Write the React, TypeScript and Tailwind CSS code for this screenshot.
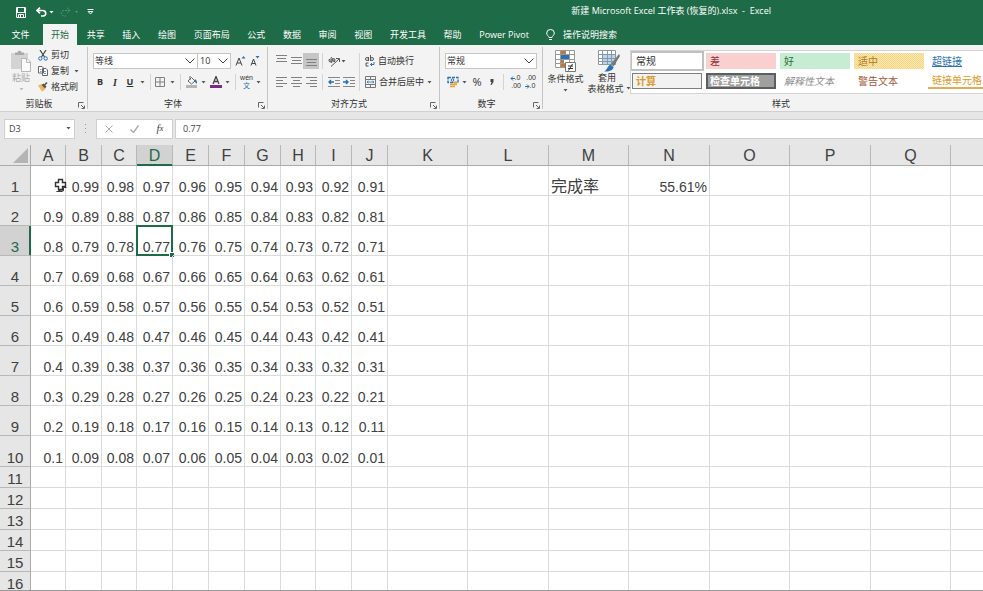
import React from 'react';

interface Column {
    name: string;
    width: number;
}

const columns: Column[] = [
    { name: 'A', width: 35 },
    { name: 'B', width: 36 },
    { name: 'C', width: 35 },
    { name: 'D', width: 36 },
    { name: 'E', width: 36 },
    { name: 'F', width: 36 },
    { name: 'G', width: 36 },
    { name: 'H', width: 35 },
    { name: 'I', width: 36 },
    { name: 'J', width: 36 },
    { name: 'K', width: 80 },
    { name: 'L', width: 81 },
    { name: 'M', width: 80 },
    { name: 'N', width: 81 },
    { name: 'O', width: 80 },
    { name: 'P', width: 81 },
    { name: 'Q', width: 80 },
    { name: 'R', width: 81 },
];

const ROW_HEADER = 31;
const tableWidth = columns.reduce((sum, c) => sum + c.width, ROW_HEADER);
const rows = Array.from({ length: 16 }, (_, i) => i + 1);
const tabs = ['开始', '共享', '插入', '绘图', '页面布局', '公式', '数据', '审阅', '视图', '开发工具', '帮助', 'Power Pivot'];

// A..J hold 1.00 down to 0.01, ten values per row.
const cellValue = (row: number, col: number): string => {
    if (row === 1 && columns[col].name === 'M') return '完成率';
    if (row === 1 && columns[col].name === 'N') return '55.61%';
    if (row > 10 || col > 9) return '';
    return String((100 - (row - 1) * 10 - col) / 100);
};

const Caret = () => (
    <svg width="5" height="3" viewBox="0 0 5 3" className="shrink-0">
        <path d="M0.5 0h4L2.5 2.5z" fill="#555" />
    </svg>
);

const Separator = () => <span className="h-4 w-px shrink-0 bg-[#d4d4d4]" />;

const Chevron = () => (
    <svg width="10" height="6" viewBox="0 0 10 6" className="pointer-events-none absolute right-[3px] top-[5px]">
        <path d="M0.5 0.5L5 5l4.5-4.5" fill="none" stroke="#444" />
    </svg>
);

interface ToolProps {
    label: string;
    className?: string;
    children: React.ReactNode;
}

const Tool: React.FC<ToolProps> = ({ label, className = '', children }) => (
    <button type="button" aria-label={label} title={label} className={`flex h-4 shrink-0 items-center justify-center ${className}`}>
        {children}
    </button>
);

interface GroupProps {
    title: string;
    className: string;
    titleClass?: string;
    launcher?: boolean;
    children: React.ReactNode;
}

const Group: React.FC<GroupProps> = ({ title, className, titleClass = '', launcher = true, children }) => (
    <section className={`my-0.5 flex flex-col ${className}`} aria-label={title}>
        <div className="h-12">{children}</div>
        <div className={`flex h-[14px] items-center pt-[3px] ${titleClass}`}>
            <span className="flex-1 text-center leading-3">{title}</span>
            {launcher && (
                <button type="button" aria-label={`${title}设置`} className="pr-0.5 pt-1">
                    <svg width="7" height="7" viewBox="0 0 7 7" fill="none" stroke="#666">
                        <path d="M0.5 5.5v-5h5M3 3l3 3M6.5 3.5v3h-3" />
                    </svg>
                </button>
            )}
        </div>
    </section>
);

const AlignLines = ({ d }: { d: string }) => (
    <svg width="11" height="12" viewBox="0 0 11 12" fill="none" stroke="#808080">
        <path d={d} />
    </svg>
);

const Indent = ({ arrow }: { arrow: string }) => (
    <svg width="12" height="11" viewBox="0 0 12 11" fill="none">
        <path d="M0 0.5h12M7 3.5h5M7 6.5h5M0 9.5h12" stroke="#888" />
        <path d={arrow} stroke="#2672b8" strokeWidth="1.4" />
    </svg>
);

const TitleBar = () => (
    <header className="bg-[#1e6b47] text-white">
        <div className="flex h-6 items-center">
            <div className="flex flex-1 items-center pl-[15px]">
                <Tool label="保存" className="w-3">
                    <svg width="10" height="11" viewBox="0 0 10 11" fill="none" stroke="white">
                        <path d="M0.5 0.5h9v10h-9zM1 5.5h8" />
                        <path d="M1.5 1v4M8.5 1v4M2.5 10.5v-3h5v3M4.5 8v2" />
                    </svg>
                </Tool>
                <Tool label="撤消" className="ml-[9px] w-[11px]">
                    <svg width="11" height="10" viewBox="0 0 11 10" fill="none" stroke="white" strokeWidth="1.6">
                        <path d="M4 0.7L1 3.5l3 2.8M1 3.5h5.5c4 0 4.5 5 0.5 5.5H5" />
                    </svg>
                </Tool>
                <svg width="5" height="3" viewBox="0 0 5 3" className="ml-[2px]"><path d="M0.5 0h4L2.5 2.5z" fill="white" /></svg>
                <Tool label="恢复" className="ml-[6px] w-[11px]">
                    <svg width="11" height="10" viewBox="0 0 11 10" fill="none" stroke="#56957a" strokeDasharray="2 1">
                        <path d="M7 0.7l3 2.8-3 2.8M10 3.5H4.5c-4 0-4.5 5-0.5 5.5H6" />
                    </svg>
                </Tool>
                <svg width="5" height="3" viewBox="0 0 5 3" className="ml-[3px]"><path d="M1 0h3L2.5 2z" fill="#56957a" /></svg>
                <Tool label="自定义快速访问工具栏" className="ml-2 w-[7px]">
                    <svg width="7" height="6" viewBox="0 0 7 6" fill="none" stroke="white">
                        <path d="M0.5 0.5h6M1.2 2.5h4.6L3.5 5z" />
                    </svg>
                </Tool>
            </div>
            <h1 className="whitespace-pre pb-0.5">新建 Microsoft Excel 工作表 (恢复的).xlsx  -  Excel</h1>
            <div className="w-[212px]" />
        </div>
        <nav className="flex h-[21px] items-stretch">
            <button type="button" className="w-[43px] pr-0.5">文件</button>
            <div className="flex w-[494px] items-stretch justify-between">
                {tabs.map((tab) => (
                    <button
                        key={tab}
                        type="button"
                        className={`shrink-0 whitespace-nowrap px-2 ${tab === '开始' ? 'bg-[#f3f3f3] text-[#1e6b47]' : ''}`}
                    >
                        {tab}
                    </button>
                ))}
            </div>
            <button type="button" className="flex items-center gap-2 pl-[9px]">
                <svg width="9" height="12" viewBox="0 0 9 12" fill="none" stroke="white">
                    <path d="M3 8.5C3 7 0.7 6.5 0.7 4a3.8 3.5 0 0 1 7.6 0C8.3 6.5 6 7 6 8.5zM3 10.5h3" />
                </svg>
                操作说明搜索
            </button>
        </nav>
    </header>
);

const ClipboardGroup = () => (
    <Group title="剪贴板" className="w-[87px]">
        <div className="flex">
            <button type="button" className="flex w-[38px] flex-col items-center pl-1 pt-[3px] text-[#aaa]">
                <svg width="20" height="22" viewBox="0 0 20 22">
                    <path d="M0 3h17v16H0z" fill="#d3d3d3" />
                    <path d="M4 2.5h2.5c0-2.5 4-2.5 4 0H13V5H4z" fill="#aaa" />
                    <path d="M10.5 8.5h5.5l3.5 3.5v9.5h-9z" fill="#fafafa" stroke="#b5b5b5" />
                    <path d="M15.5 8.5v4h4" fill="none" stroke="#b5b5b5" />
                </svg>
                <span className="leading-3">粘贴</span>
                <svg width="5" height="3" viewBox="0 0 5 3" className="mt-1"><path d="M0.5 0h4L2.5 2.5z" fill="#bbb" /></svg>
            </button>
            <div className="flex flex-col">
                <button type="button" className="flex h-4 items-center gap-[3px]">
                    <svg width="10" height="11" viewBox="0 0 10 11" fill="none">
                        <path d="M2 0l4.5 7M8 0L3.5 7" stroke="#444" strokeWidth="1.2" />
                        <circle cx="2.3" cy="8.5" r="1.7" stroke="#2672b8" />
                        <circle cx="7.7" cy="8.5" r="1.7" stroke="#2672b8" />
                    </svg>
                    剪切
                </button>
                <button type="button" className="flex h-4 items-center gap-[3px]">
                    <svg width="10" height="10" viewBox="0 0 10 10" fill="white" stroke="#666">
                        <path d="M0.5 0.5h3.5l1.5 1.5v5h-5zM4.5 2.5H8L9.5 4v5.5h-5z" />
                        <path d="M6 5.5h2M6 7.5h2M2 3.5h1.5M2 5.5h1.5" stroke="#2672b8" strokeWidth="0.7" />
                    </svg>
                    复制
                    <span className="pl-0.5"><Caret /></span>
                </button>
                <button type="button" className="flex h-4 items-center gap-[3px]">
                    <svg width="10" height="10" viewBox="0 0 10 10">
                        <path d="M0 3.5L3.5 2l4 4L6 8.5 4 9.5z" fill="#f0b65a" />
                        <path d="M3.5 3l2-1.5 3 3L7 6.5z" fill="#555" />
                        <path d="M6 3.5L9 0.5" stroke="#555" strokeWidth="1.6" />
                    </svg>
                    格式刷
                </button>
            </div>
        </div>
    </Group>
);

const FontGroup = () => (
    <Group title="字体" className="w-[180px] border-l border-[#c4c4c4]">
        <div className="flex h-[22px] items-end pl-[5px]">
            <label className="relative block w-[105px]">
                <select aria-label="字体" className="block h-4 w-full appearance-none border border-[#c6c6c6] bg-white px-px leading-[14px]">
                    <option>等线</option>
                </select>
                <Chevron />
            </label>
            <label className="relative -ml-px block w-[34px]">
                <select aria-label="字号" className="block h-4 w-full appearance-none border border-[#c6c6c6] bg-white px-0.5 leading-[14px]">
                    <option>10</option>
                </select>
                <Chevron />
            </label>
            <Tool label="增大字号" className="ml-[3px] w-3">
                <svg width="11" height="11" viewBox="0 0 11 11" fill="none">
                    <path d="M1 9.5L4 2l3 7.5M2 7h4" stroke="#444" />
                    <path d="M6.5 2.5h4L8.5 0z" fill="#2672b8" />
                </svg>
            </Tool>
            <Tool label="减小字号" className="ml-[3px] w-3">
                <svg width="10" height="11" viewBox="0 0 10 11" fill="none">
                    <path d="M1 9.5L3.5 3 6 9.5M2 7.5h3" stroke="#444" />
                    <path d="M5.5 0h4L7.5 2.5z" fill="#2672b8" />
                </svg>
            </Tool>
        </div>
        <div className="flex h-[26px] items-center pl-[5px]">
            <Tool label="加粗" className="w-[14px] font-bold">B</Tool>
            <Tool label="倾斜" className="w-4 font-['Liberation_Serif',serif] text-[10px] font-bold italic">I</Tool>
            <Tool label="下划线" className="w-[14px] font-bold underline">U</Tool>
            <span className="ml-[3px]"><Caret /></span>
            <span className="ml-[5px] flex"><Separator /></span>
            <Tool label="边框" className="ml-1 w-[11px]">
                <svg width="11" height="11" viewBox="0 0 11 11" fill="none" stroke="#808080">
                    <path d="M0.5 0.5h9v9h-9zM5 0v10M0 5h10" />
                </svg>
            </Tool>
            <span className="ml-1"><Caret /></span>
            <span className="ml-[5px] flex"><Separator /></span>
            <Tool label="填充颜色" className="ml-[5px] w-3">
                <svg width="12" height="12" viewBox="0 0 12 12" fill="none">
                    <path d="M0 9h11v3H0z" fill="#b5b5b5" />
                    <path d="M2 5L5.5 1.5 9 5 5.5 8zM4 0v4" stroke="#666" />
                    <path d="M9 3c2 1.5 2.5 3 1.5 5L8.5 5z" fill="#2672b8" />
                </svg>
            </Tool>
            <span className="ml-[3px]"><Caret /></span>
            <Tool label="字体颜色" className="ml-1 w-3">
                <svg width="12" height="12" viewBox="0 0 12 12" fill="none">
                    <path d="M3 8L6 0.5 9 8M4 5.5h4" stroke="#444" strokeWidth="1.3" />
                    <path d="M0 9h12v3H0z" fill="#7b2a83" />
                </svg>
            </Tool>
            <span className="ml-[3px]"><Caret /></span>
            <span className="ml-[5px] flex"><Separator /></span>
            <Tool label="显示拼音" className="ml-1 w-[13px] flex-col font-['Liberation_Sans','Noto_Sans_CJK_SC',sans-serif] text-[7px] leading-[8px]">
                <span>wén</span>
                <span className="text-[#2672b8]">文</span>
            </Tool>
            <span className="ml-[3px]"><Caret /></span>
        </div>
    </Group>
);

const AlignGroup = () => (
    <Group title="对齐方式" className="w-[172px] border-l border-[#c4c4c4]">
        <div className="flex">
            <div>
                <div className="flex h-[22px] items-end pl-[5px]">
                    <Tool label="顶端对齐" className="w-4"><AlignLines d="M0 0.5h11M1 3.5h9M0 6.5h11" /></Tool>
                    <Tool label="垂直居中" className="w-[14px]"><AlignLines d="M0 2.5h11M1 5.5h9M0 8.5h11" /></Tool>
                    <Tool label="底端对齐" className="w-4 bg-[#c6c6c6]"><AlignLines d="M0 4.5h11M1 7.5h9M0 10.5h11" /></Tool>
                    <span className="ml-[3px] flex"><Separator /></span>
                    <Tool label="方向" className="ml-1 w-[13px]">
                        <svg width="12" height="11" viewBox="0 0 12 11" fill="none" stroke="#555">
                            <path d="M3 10.5L11 3M8 2.5h3.5V6" />
                            <circle cx="2.5" cy="4.5" r="1.5" />
                            <circle cx="5.5" cy="4" r="1.5" />
                            <path d="M3 1l4 5M1 3l3 4" />
                        </svg>
                    </Tool>
                    <span className="flex h-4 items-center pl-px"><Caret /></span>
                </div>
                <div className="flex h-[26px] items-center pl-[5px]">
                    <Tool label="左对齐" className="w-4"><AlignLines d="M0 1.5h11M0 4.5h7M0 7.5h11M0 10.5h7" /></Tool>
                    <Tool label="居中" className="w-[14px]"><AlignLines d="M0 1.5h11M2 4.5h7M0 7.5h11M2 10.5h7" /></Tool>
                    <Tool label="右对齐" className="w-4"><AlignLines d="M0 1.5h11M4 4.5h7M0 7.5h11M4 10.5h7" /></Tool>
                    <span className="ml-[3px] flex"><Separator /></span>
                    <Tool label="减少缩进量" className="ml-1 w-[13px]"><Indent arrow="M6 5H1M3 3L1 5l2 2" /></Tool>
                    <Tool label="增加缩进量" className="ml-0.5 w-[13px]"><Indent arrow="M0 5h5M3 3l2 2-2 2" /></Tool>
                </div>
            </div>
            <div className="ml-1 mt-1.5 h-[38px] w-px bg-[#d4d4d4]" />
            <div className="pl-[5px]">
                <button type="button" className="flex h-[22px] items-end">
                    <span className="flex h-4 items-center gap-[3px]">
                        <svg width="10" height="12" viewBox="0 0 10 12" fill="none" stroke="#555">
                            <circle cx="2" cy="4" r="1.5" />
                            <circle cx="7" cy="4" r="1.5" />
                            <path d="M3.5 2v4M5.5 0v6M3.5 8H1v3h2.5" />
                            <path d="M9 7v2.5H5.5M7 8L5.5 9.5 7 11" stroke="#2672b8" />
                        </svg>
                        自动换行
                    </span>
                </button>
                <button type="button" className="flex h-[26px] items-center gap-[3px]">
                    <svg width="11" height="12" viewBox="0 0 11 12" fill="none" stroke="#777">
                        <path d="M0.5 0.5h10v11h-10zM0 3.5h11M0 8.5h11M5.5 0v3M5.5 9v3" />
                        <path d="M2 6h7M3.5 4.8L2 6l1.5 1.2M7.5 4.8L9 6 7.5 7.2" stroke="#2672b8" strokeWidth="0.8" />
                    </svg>
                    合并后居中
                    <Caret />
                </button>
            </div>
        </div>
    </Group>
);

const NumberGroup = () => (
    <Group title="数字" className="w-[103px] border-l border-[#c4c4c4]">
        <div className="flex h-[22px] items-end pl-[5px]">
            <label className="relative block w-[92px]">
                <select aria-label="数字格式" className="block h-4 w-full appearance-none border border-[#c6c6c6] bg-white px-px leading-[14px]">
                    <option>常规</option>
                </select>
                <Chevron />
            </label>
        </div>
        <div className="flex h-[26px] items-center pl-[7px]">
            <Tool label="会计数字格式" className="w-3">
                <svg width="12" height="12" viewBox="0 0 12 12" fill="none">
                    <path d="M1 1.5h10v5H1z" stroke="#2672b8" strokeWidth="1.4" strokeDasharray="3 1" />
                    <circle cx="5.5" cy="4" r="1.3" stroke="#2672b8" />
                    <path d="M6 6.5h5M6 8.5h4M3 8.5h3M3 10.5h5" stroke="#e8a33d" strokeWidth="1.3" />
                </svg>
            </Tool>
            <span className="ml-[3px]"><Caret /></span>
            <Tool label="百分比样式" className="ml-[3px] w-[14px] text-[11px]">%</Tool>
            <Tool label="千位分隔样式" className="ml-0.5 w-3">
                <svg width="4" height="6" viewBox="0 0 4 6"><path d="M0.5 0h3v3l-2 3h-1l1-3h-1z" fill="#444" /></svg>
            </Tool>
            <span className="ml-[5px] flex"><Separator /></span>
            <Tool label="增加小数位数" className="ml-[5px] w-3 flex-col font-['Liberation_Sans',sans-serif] text-[7px] leading-[8px]">
                <span className="flex items-center">
                    <svg width="5" height="5" viewBox="0 0 5 5" fill="none" stroke="#2672b8"><path d="M5 2.5H1M3 0.5l-2 2 2 2" /></svg>
                    .0
                </span>
                <span className="self-end">.00</span>
            </Tool>
            <Tool label="减少小数位数" className="ml-[3px] w-3 flex-col font-['Liberation_Sans',sans-serif] text-[7px] leading-[8px]">
                <span className="self-end">.00</span>
                <span className="flex items-center">
                    <svg width="5" height="5" viewBox="0 0 5 5" fill="none" stroke="#2672b8"><path d="M0 2.5h4M2 0.5l2 2-2 2" /></svg>
                    .0
                </span>
            </Tool>
        </div>
    </Group>
);

const cellStyles = [
    { name: '常规', look: 'bg-white px-1 text-[#333] outline-2 outline-[#c0c0c0]' },
    { name: '差', look: 'bg-[#fad0ce] px-1 text-[#8d3040]' },
    { name: '好', look: 'bg-[#c6ecd1] px-1 text-[#2d6e3a]' },
    { name: '适中', look: 'bg-[#fde9ab] bg-[repeating-conic-gradient(#f3d58a_0_25%,transparent_0_50%)] bg-[size:2px_2px] px-1 text-[#b07b1e]' },
    { name: '超链接', look: 'px-1 text-[#2c72b0] underline' },
    { name: '计算', look: 'border border-[#7f7f7f] bg-[#f2f2f2] px-[3px] font-bold text-[#dd9a2c]' },
    { name: '检查单元格', look: 'border-2 border-[#5c5e60] bg-[#a0a0a0] px-0.5 font-bold text-white' },
    { name: '解释性文本', look: 'px-1 italic text-[#8c8c8c]' },
    { name: '警告文本', look: 'px-1 text-[#a5563a]' },
    { name: '链接单元格', look: 'border-b-2 border-[#e3ad58] px-1 text-[#dd9a2c]' },
];

const StylesGroup = () => (
    <Group title="样式" className="min-w-0 flex-1 border-l border-[#c4c4c4]" titleClass="pl-9" launcher={false}>
        <div className="flex">
            <button type="button" className="flex w-[45px] flex-col items-center pt-[3px]">
                <svg width="22" height="22" viewBox="0 0 22 22" fill="none">
                    <path d="M0.5 0.5h19v17h-19zM0 4.5h20M0 9.5h20M0 13.5h20M5.5 0v18M14.5 0v18" fill="white" stroke="#999" />
                    <path d="M6 1h5v3H6zM6 10h3v3H6zM6 14h5v3H6z" fill="#c27a35" />
                    <path d="M6 5h8v4H6z" fill="#2672b8" />
                    <path d="M10.5 12.5h10v9h-10z" fill="white" stroke="#777" />
                    <path d="M13 16h5M13 18.5h5M17.5 14l-4 6.5" stroke="#333" />
                </svg>
                <span className="whitespace-nowrap leading-[13px]">条件格式</span>
                <span className="mt-1"><Caret /></span>
            </button>
            <button type="button" className="flex w-[42px] flex-col items-center whitespace-nowrap pt-[3px]">
                <svg width="22" height="22" viewBox="0 0 22 22" fill="none">
                    <path d="M0.5 0.5h17v14h-17z" fill="white" />
                    <path d="M5 4h13v11H5z" fill="#b9d5ee" />
                    <path d="M0.5 0.5h17v14h-17zM0 4.5h18M0 8.5h18M0 11.5h18M4.5 0v15M9.5 0v15M13.5 0v15" stroke="#8a98a5" />
                    <path d="M21 4l-8 10 2.5 2.5L22 6z" fill="#777" />
                    <path d="M12.5 14.5l3 2.5c0 3-4 5-9.5 4.5 3-1 3-5 6.5-7z" fill="#2672b8" />
                </svg>
                <span className="pr-1 leading-[11px]">套用</span>
                <span className="flex items-center gap-0.5 leading-[11px]">
                    表格格式
                    <Caret />
                </span>
            </button>
            <div className="mt-[3px] min-w-0 flex-1 overflow-hidden border-y border-l border-[#d4d4d4] bg-white">
                <div className="grid grid-cols-[repeat(5,70px)] gap-1 py-[2px] pl-px">
                    {cellStyles.map((item) => (
                        <button key={item.name} type="button" className={`flex h-4 items-center whitespace-nowrap text-[10px] leading-[12px] ${item.look}`}>
                            {item.name}
                        </button>
                    ))}
                </div>
            </div>
        </div>
    </Group>
);

const FormulaBar = () => (
    <div className="flex h-[33px] shrink-0 items-center bg-[#e6e6e6] pl-1 text-[#444]">
        <label className="relative block w-[71px]">
            <input aria-label="名称框" defaultValue="D3" className="block h-5 w-full border border-[#cfcfcf] bg-white px-1" />
            <span className="pointer-events-none absolute right-1 top-2"><Caret /></span>
        </label>
        <svg width="3" height="9" viewBox="0 0 3 9" className="mx-[9px]" fill="#999">
            <path d="M1 0h1v1H1zM1 4h1v1H1zM1 8h1v1H1z" />
        </svg>
        <div className="flex h-5 w-[77px] items-center justify-around border border-[#cfcfcf] bg-white">
            <Tool label="取消">
                <svg width="8" height="8" viewBox="0 0 8 8" stroke="#aaa"><path d="M0.5 0.5l7 7M7.5 0.5l-7 7" /></svg>
            </Tool>
            <Tool label="输入">
                <svg width="9" height="8" viewBox="0 0 9 8" fill="none" stroke="#aaa" strokeWidth="1.4"><path d="M0.5 4.5l3 3 5-7" /></svg>
            </Tool>
            <Tool label="插入函数" className="font-['Liberation_Serif',serif] text-[11px] italic">
                f<span className="text-[9px]">x</span>
            </Tool>
        </div>
        <input aria-label="编辑栏" defaultValue="0.77" className="ml-0.5 h-5 min-w-0 flex-1 border border-r-0 border-[#cfcfcf] bg-white px-[7px]" />
    </div>
);

const MouseCursor = () => (
    <svg width="13" height="14" viewBox="0 0 13 14" className="absolute left-[23px] top-3">
        <path d="M4.5 1.5h4v3h3v4h-3v3h-4v-3h-3v-4h3z" fill="white" stroke="#333" strokeWidth="1.4" />
        <path d="M4 12.8h5.5V9.5h3" fill="none" stroke="#333" />
    </svg>
);

const Sheet = () => (
    <main className="min-h-0 flex-1 overflow-hidden border-b border-[#999] bg-white font-['Liberation_Sans','Noto_Sans_CJK_SC',sans-serif] text-[#404040]">
        <table className="table-fixed border-separate border-spacing-0" style={{ width: tableWidth }}>
            <colgroup>
                <col style={{ width: ROW_HEADER }} />
                {columns.map((c) => <col key={c.name} style={{ width: c.width }} />)}
            </colgroup>
            <thead>
                <tr className="h-[21px] bg-[#e6e6e6] text-base leading-[18px]">
                    <th className="border-b border-r border-[#ababab] p-0" aria-label="全选">
                        <svg width="15" height="15" viewBox="0 0 15 15" className="ml-auto mr-0.5"><path d="M15 0v15H0z" fill="#b4b4b4" /></svg>
                    </th>
                    {columns.map((c) => (
                        <th
                            key={c.name}
                            scope="col"
                            className={`border-b border-r border-r-[#b8b8b8] p-0 pt-0.5 font-normal ${c.name === 'D' ? 'border-b-[#1e6b47] bg-[#d2d2d2] text-[#1e6b47] shadow-[inset_0_-1px_#1e6b47]' : 'border-b-[#ababab]'}`}
                        >
                            {c.name}
                        </th>
                    ))}
                </tr>
            </thead>
            <tbody>
                {rows.map((row) => (
                    <tr key={row} className={`align-bottom ${row < 10 ? 'h-[30px]' : row === 10 ? 'h-[31px]' : 'h-[21px]'}`}>
                        <th
                            scope="row"
                            className={`border-b border-r border-b-[#b8b8b8] p-0 text-[15px] leading-4 font-normal ${row === 3 ? 'border-r-[#1e6b47] bg-[#d2d2d2] text-[#1e6b47] shadow-[inset_-1px_0_#1e6b47]' : 'border-r-[#ababab] bg-[#e6e6e6]'}`}
                        >
                            {row}
                        </th>
                        {columns.map((c, col) => (
                            <td
                                key={c.name}
                                className={`relative whitespace-nowrap border-b border-r border-[#dadada] p-0 ${c.name === 'M' ? 'pl-0.5 text-left text-base leading-4' : 'pr-0.5 text-right text-sm leading-4'}`}
                            >
                                {cellValue(row, col)}
                                {row === 1 && c.name === 'A' && <MouseCursor />}
                                {row === 3 && c.name === 'D' && (
                                    <span className="absolute -bottom-px -left-px -right-px -top-px border-2 border-[#1e6b47]">
                                        <span className="absolute -bottom-[3px] -right-[3px] size-[5px] border-l border-t border-white bg-[#1e6b47]" />
                                    </span>
                                )}
                            </td>
                        ))}
                    </tr>
                ))}
            </tbody>
        </table>
    </main>
);

const App: React.FC = () => {
    return (
        <div className="flex h-screen flex-col overflow-hidden bg-[#e6e6e6] font-['Open_Sans','Noto_Sans_CJK_SC',sans-serif] text-[9px] text-[#333]">
            <TitleBar />
            <div className="flex shrink-0 border-b border-[#d0d0d0] bg-[#f3f3f3]">
                <ClipboardGroup />
                <FontGroup />
                <AlignGroup />
                <NumberGroup />
                <StylesGroup />
            </div>
            <FormulaBar />
            <Sheet />
        </div>
    );
};

export default App;
